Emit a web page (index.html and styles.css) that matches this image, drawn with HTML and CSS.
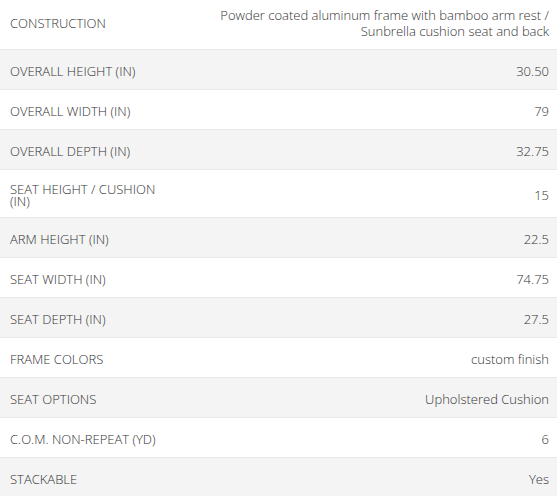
FILE: index.html
```html
<!DOCTYPE html>
<html>
<head>
<meta charset="utf-8">
<link rel="stylesheet" href="styles.css">
</head>
<body>
<div class="specs">
  <div class="row"><div class="label">CONSTRUCTION</div><div class="value">Powder coated aluminum frame with bamboo arm rest / Sunbrella cushion seat and back</div></div>
  <div class="row alt"><div class="label">OVERALL HEIGHT (IN)</div><div class="value">30.50</div></div>
  <div class="row"><div class="label">OVERALL WIDTH (IN)</div><div class="value">79</div></div>
  <div class="row alt"><div class="label">OVERALL DEPTH (IN)</div><div class="value">32.75</div></div>
  <div class="row"><div class="label">SEAT HEIGHT / CUSHION (IN)</div><div class="value">15</div></div>
  <div class="row alt"><div class="label">ARM HEIGHT (IN)</div><div class="value">22.5</div></div>
  <div class="row"><div class="label">SEAT WIDTH (IN)</div><div class="value">74.75</div></div>
  <div class="row alt"><div class="label">SEAT DEPTH (IN)</div><div class="value">27.5</div></div>
  <div class="row"><div class="label">FRAME COLORS</div><div class="value">custom finish</div></div>
  <div class="row alt"><div class="label">SEAT OPTIONS</div><div class="value">Upholstered Cushion</div></div>
  <div class="row"><div class="label">C.O.M. NON-REPEAT (YD)</div><div class="value">6</div></div>
  <div class="row alt"><div class="label">STACKABLE</div><div class="value">Yes</div></div>
</div>
</body>
</html>
```
FILE: styles.css
```css
html, body {
  margin: 0;
  padding: 0;
  background: #fff;
}
body {
  font-family: "Open Sans", sans-serif;
  font-size: 13px;
  font-weight: 300;
  color: #333;
}
.specs {
  margin-top: -6px;
}
.row {
  display: grid;
  grid-template-columns: 30% 70%;
  align-items: center;
  padding: 13px 8px 10px 10px;
  border-bottom: 1px solid #e8e8e8;
  background: #fff;
}
.row.alt {
  background: #f4f4f4;
}
.label {
  line-height: 12px;
  padding-right: 10px;
}
.value {
  line-height: 16px;
  text-align: right;
}
```
